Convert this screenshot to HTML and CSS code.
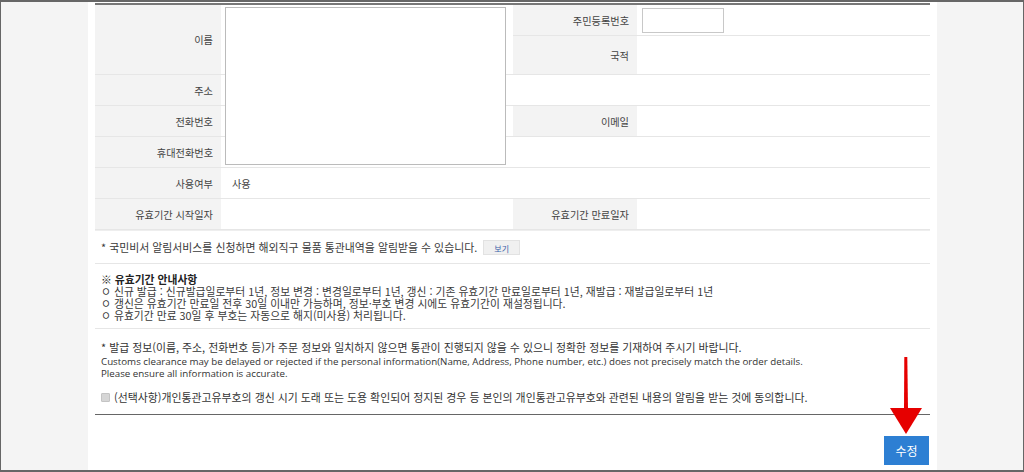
FILE: index.html
```html
<!DOCTYPE html>
<html lang="ko">
<head>
<meta charset="utf-8">
<link rel="stylesheet" href="styles.css">
</head>
<body>
<div class="frame">
  <div class="side side-left"></div>
  <main class="main">
    <div class="form">
      <div class="grid">
        <div class="lbl r1-2">이름</div>
        <div class="val c2 r1-2"></div>
        <div class="lbl c3">주민등록번호</div>
        <div class="val c4"><span class="input"></span></div>
        <div class="lbl c3">국적</div>
        <div class="val c4"></div>

        <div class="lbl">주소</div>
        <div class="val span3"></div>

        <div class="lbl">전화번호</div>
        <div class="val"></div>
        <div class="lbl">이메일</div>
        <div class="val"></div>

        <div class="lbl">휴대전화번호</div>
        <div class="val span3"></div>

        <div class="lbl">사용여부</div>
        <div class="val span3 txt">사용</div>

        <div class="lbl">유효기간 시작일자</div>
        <div class="val"></div>
        <div class="lbl">유효기간 만료일자</div>
        <div class="val"></div>

        <div class="overlay"></div>
      </div>

      <div class="notice">
        <span>* 국민비서 알림서비스를 신청하면 해외직구 물품 통관내역을 알림받을 수 있습니다.</span>
        <span class="btn-view">보기</span>
      </div>

      <div class="guide">
        <p class="guide-title">※ 유효기간 안내사항</p>
        <p>ㅇ 신규 발급 : 신규발급일로부터 1년, 정보 변경 : 변경일로부터 1년, 갱신 : 기존 유효기간 만료일로부터 1년, 재발급 : 재발급일로부터 1년</p>
        <p>ㅇ 갱신은 유효기간 만료일 전후 30일 이내만 가능하며, 정보·부호 변경 시에도 유효기간이 재설정됩니다.</p>
        <p>ㅇ 유효기간 만료 30일 후 부호는 자동으로 해지(미사용) 처리됩니다.</p>
      </div>

      <div class="warn">
        <p class="ko">* 발급 정보(이름, 주소, 전화번호 등)가 주문 정보와 일치하지 않으면 통관이 진행되지 않을 수 있으니 정확한 정보를 기재하여 주시기 바랍니다.</p>
        <p class="en">Customs clearance may be delayed or rejected if the personal information(Name, Address, Phone number, etc.) does not precisely match the order details.</p>
        <p class="en">Please ensure all information is accurate.</p>
        <p class="agree"><span class="chk"></span>(선택사항)개인통관고유부호의 갱신 시기 도래 또는 도용 확인되어 정지된 경우 등 본인의 개인통관고유부호와 관련된 내용의 알림을 받는 것에 동의합니다.</p>
      </div>

      <div class="actions">
        <span class="btn-submit">수정</span>
        <svg class="arrow" width="34" height="80" viewBox="0 0 34 80">
          <path d="M15.3 0 L18.3 0 L19 52 L15 52 Z" fill="#e60000"/>
          <path d="M1 51 L33 51 L17 77 Z" fill="#e60000"/>
        </svg>
      </div>
    </div>
  </main>
  <div class="side side-right"></div>
</div>
</body>
</html>
```

FILE: styles.css
```css
* { box-sizing: border-box; }
html, body { margin: 0; padding: 0; }
body {
  width: 1024px;
  height: 472px;
  overflow: hidden;
  font-family: "Noto Sans CJK KR", "Noto Sans", sans-serif;
  font-size: 10.9px;
  color: #333;
  background: #fff;
}
.frame {
  display: flex;
  width: 1024px;
  height: 472px;
  border: 1px solid #666;
  border-top-width: 2px;
  border-bottom-width: 2px;
}
.side { background: #f4f4f4; }
.side-left { width: 87px; }
.side-right { flex: 1; }
.main {
  width: 849px;
  background: #fff;
  padding: 1px 7px 0;
}
.form { position: relative; width: 835px; }

.grid {
  position: relative;
  display: grid;
  grid-template-columns: 126px 292px 124px 293px;
  grid-template-rows: 31px 39px 31px 31px 31px 31px 31px;
  border-top: 2px solid #777;
}
.lbl {
  background: #f3f3f3;
  color: #444;
  font-size: 10.2px;
  display: flex;
  align-items: center;
  justify-content: flex-end;
  padding-right: 8px;
  border-bottom: 1px solid #e6e6e6;
}
.val {
  border-bottom: 1px solid #e6e6e6;
  display: flex;
  align-items: center;
}
.r1-2 { grid-row: 1 / 3; grid-column: 1; }
.c2 { grid-column: 2; }
.c3 { grid-column: 3; }
.c4 { grid-column: 4; }
.span3 { grid-column: 2 / 5; }
.txt { padding-left: 11px; color: #444; font-size: 10.2px; }
.input {
  display: block;
  margin-left: 5px;
  width: 82px;
  height: 25px;
  border: 1px solid #c8c8c8;
  background: #fff;
}
.overlay {
  position: absolute;
  left: 130px;
  top: 2px;
  width: 281px;
  height: 158px;
  border: 1px solid #bbb;
  background: #fff;
}

.notice {
  height: 34px;
  display: flex;
  align-items: center;
  padding-left: 6px;
  border-top: 1px solid #eee;
  border-bottom: 1px solid #e6e6e6;
  color: #3a3a3a;
}
.btn-view {
  display: inline-block;
  margin-left: 6px;
  width: 37px;
  height: 15px;
  line-height: 15px;
  text-align: center;
  font-size: 8px;
  color: #3a5fa8;
  background: #f0f0f0;
  border: 1px solid #e2e2e2;
}

.guide {
  padding: 9px 0 7px 6px;
  border-bottom: 1px solid #e6e6e6;
  color: #3a3a3a;
  font-size: 10.8px;
}
.guide p { margin: 0; line-height: 12px; }
.guide-title { font-weight: bold; color: #222; }

.warn {
  padding: 11px 0 10px 6px;
  border-bottom: 1px solid #666;
  color: #333;
}
.warn p { margin: 0; line-height: 12px; }
.warn .ko { line-height: 15px; margin-bottom: 1px; }
.warn .en { font-family: "Open Sans", "Noto Sans", sans-serif; font-size: 9.75px; }
.warn .agree {
  margin-top: 10px;
  display: flex;
  align-items: center;
  line-height: 14px;
}
.chk {
  display: inline-block;
  width: 9px;
  height: 9px;
  margin-right: 4px;
  background: #d6d6d6;
  border: 1px solid #c4c4c4;
  border-radius: 1px;
}

.actions {
  position: relative;
  height: 55px;
  display: flex;
  justify-content: flex-end;
  align-items: flex-end;
  padding-bottom: 5px;
}
.btn-submit {
  display: flex;
  align-items: center;
  justify-content: center;
  width: 45px;
  height: 29px;
  background: #2d7fd3;
  color: #fff;
  font-size: 12px;
  margin-right: 1px;
}
.arrow {
  position: absolute;
  right: 7px;
  top: -58px;
}
```
